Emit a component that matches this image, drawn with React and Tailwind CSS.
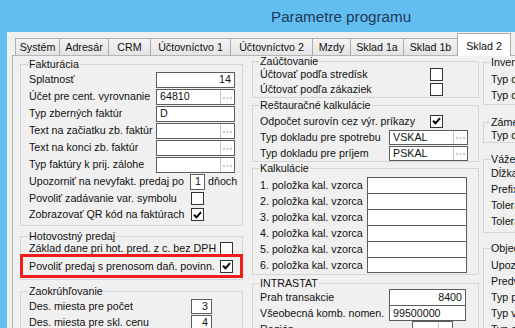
import clsx from 'clsx';

function Check({ on }) {
  return (
    <span className="w-[13px] h-[13px] shrink-0 border border-[#333] bg-white flex items-center justify-center">
      {on && (
        <svg width="9" height="8" viewBox="0 0 9 8">
          <path d="M1 3.8 L3.5 6.3 L8 1.2" fill="none" stroke="#000" strokeWidth="2" />
        </svg>
      )}
    </span>
  );
}

function Dots() {
  return (
    <span className="w-[14px] shrink-0 border-l border-[#c4c4c4] flex items-center justify-center pt-[2px]">
      <svg width="9" height="2" viewBox="0 0 9 2">
        <path d="M0 1h2M3.5 1h2M7 1h2" stroke="#9a9a9a" strokeWidth="1" />
      </svg>
    </span>
  );
}

function Input({ value, right, dots, className, h = 'h-[16px]' }) {
  return (
    <div className={clsx('shrink-0 border border-[#5c5c5c] bg-white flex items-stretch', h, className)}>
      <span className={clsx('flex-1 flex items-center px-[3px] overflow-hidden whitespace-nowrap', right && 'justify-end')}>
        {value}
      </span>
      {dots && <Dots />}
    </div>
  );
}

function Row({ label, lw, h = 'h-[17px]', children }) {
  return (
    <div className={clsx('flex items-center', h)}>
      <span className={clsx('whitespace-nowrap shrink-0 overflow-hidden', lw)}>{label}</span>
      {children}
    </div>
  );
}

function Group({ title, className, children }) {
  return (
    <fieldset className={clsx('border border-[#d5d5d5] min-w-0 m-0', className)}>
      <legend className="-ml-px px-px leading-[12px] whitespace-nowrap">{title}</legend>
      {children}
    </fieldset>
  );
}

const tabs = [
  ['Systém', 'w-[45px] border-l'],
  ['Adresár', 'w-[49px]'],
  ['CRM', 'w-[42px]'],
  ['Účtovníctvo 1', 'w-[80px]'],
  ['Účtovníctvo 2', 'w-[82px]'],
  ['Mzdy', 'w-[38px]'],
  ['Sklad 1a', 'w-[53px]'],
  ['Sklad 1b', 'w-[54px]'],
];

export default function App() {
  return (
    <div className="w-[515px] h-[328px] overflow-hidden bg-[#62bdf0] text-[10.7px] leading-[13px] text-[#111] flex flex-col font-['Liberation_Sans',Arial,sans-serif]">
      <div className="h-[32px] shrink-0 flex items-center pl-[271px] text-[15.2px] text-[#203a58]">
        Parametre programu
      </div>

      <div className="flex-1 ml-[7px] bg-[#f0f0f0] pl-[5px] flex flex-col min-h-0">
        {/* tabs */}
        <div className="h-[22px] mt-[1px] shrink-0 flex items-end pl-[3px]">
          {tabs.map(([t, w]) => (
            <div
              key={t}
              className={clsx(
                'h-[17px] shrink-0 border-t border-r border-[#acacac] bg-linear-to-b from-[#f3f3f3] to-[#e4e4e4] flex items-center justify-center whitespace-nowrap pt-px',
                w
              )}
            >
              {t}
            </div>
          ))}
          <div className="relative z-10 -ml-px -mb-px w-[54px] h-[23px] shrink-0 border-l border-t border-r border-[#acacac] bg-white flex items-center justify-center pt-[3px]">
            Sklad 2
          </div>
        </div>

        {/* panel */}
        <div className="flex-1 border-t border-l border-[#b4b4b4] flex items-start pl-[7px] min-h-0">
          {/* left column */}
          <div className="w-[223px] shrink-0 flex flex-col">
            <Group title="Fakturácia" className="mt-[2px] pl-[8px] pt-px pb-[3px]">
              <Row label="Splatnosť" lw="w-[127px]"><Input value="14" right className="w-[79px]" /></Row>
              <Row label="Účet pre cent. vyrovnanie" lw="w-[127px]"><Input value="64810" dots className="w-[79px]" /></Row>
              <Row label="Typ zberných faktúr" lw="w-[127px]"><Input value="D" className="w-[79px]" /></Row>
              <Row label="Text na začiatku zb. faktúr" lw="w-[127px]"><Input dots className="w-[79px]" /></Row>
              <Row label="Text na konci zb. faktúr" lw="w-[127px]"><Input dots className="w-[79px]" /></Row>
              <Row label="Typ faktúry k prij. zálohe" lw="w-[127px]"><Input dots className="w-[79px]" /></Row>
              <Row label="Upozorniť na nevyfakt. predaj po" lw="w-[161px]">
                <Input value="1" right className="w-[15px]" />
                <span className="ml-[3px]">dňoch</span>
              </Row>
              <Row label="Povoliť zadávanie var. symbolu" lw="w-[162px]"><Check /></Row>
              <Row label="Zobrazovať QR kód na faktúrach" lw="w-[162px]" h="h-[15px]"><Check on /></Row>
            </Group>

            <Group title="Hotovostný predaj" className="mt-[4px] pl-[8px] pt-px pb-px">
              <Row label="Základ dane pri hot. pred. z c. bez DPH" lw="w-[191px]" h="h-[11px]"><Check /></Row>
              <div className="relative -ml-[9px] w-[223px] h-[24px] border-[3px] border-[#f01c1c] pl-[6px] flex items-center">
                <span className="w-[191px] whitespace-nowrap">Povoliť predaj s prenosom daň. povinn.</span>
                <Check on />
              </div>
            </Group>

            <Group title="Zaokrúhľovanie" className="mt-[5px] pl-[8px] pt-px">
              <Row label="Des. miesta pre počet" lw="w-[162px]" h="h-[16px]"><Input value="3" right h="h-[15px]" className="w-[21px]" /></Row>
              <Row label="Des. miesta pre skl. cenu" lw="w-[162px]" h="h-[16px]"><Input value="4" right h="h-[15px]" className="w-[21px]" /></Row>
            </Group>
          </div>

          {/* middle column */}
          <div className="w-[227px] shrink-0 ml-[9px] flex flex-col">
            <Group title="Zaúčtovanie" className="-mt-px pl-[7px]">
              <Row label="Účtovať podľa stredísk" lw="w-[170px]" h="h-[15px]"><Check /></Row>
              <Row label="Účtovať podľa zákaziek" lw="w-[170px]" h="h-[15px]"><Check /></Row>
            </Group>

            <Group title="Reštauračné kalkulácie" className="mt-px pl-[7px] pt-[2px]">
              <Row label="Odpočet surovín cez výr. príkazy" lw="w-[170px]" h="h-[16px]"><Check on /></Row>
              <Row label="Typ dokladu pre spotrebu" lw="w-[129px]" h="h-[16px]"><Input value="VSKAL" dots h="h-[15px]" className="w-[79px]" /></Row>
              <Row label="Typ dokladu pre príjem" lw="w-[129px]" h="h-[16px]"><Input value="PSKAL" dots h="h-[15px]" className="w-[79px]" /></Row>
            </Group>

            <Group title="Kalkulácie" className="pl-[7px] pt-[3px] pb-px">
              {[1, 2, 3, 4, 5, 6].map(n => (
                <Row key={n} label={`${n}. položka kal. vzorca`} lw="w-[107px]" h="h-[16px]">
                  <Input className={clsx('w-[100px]', n < 6 && 'border-b-0')} />
                </Row>
              ))}
            </Group>

            <Group title="INTRASTAT" className="mt-[2px] pl-[7px]">
              <Row label="Prah transakcie" lw="w-[129px]" h="h-[16px]"><Input value="8400" right className="w-[77px] border-b-0" /></Row>
              <Row label="Všeobecná komb. nomen." lw="w-[129px]" h="h-[16px]"><Input value="99500000" className="w-[77px]" /></Row>
              <Row label="Región" lw="w-[152px]" h="h-[16px]"><Input dots className="w-[41px]" /></Row>
            </Group>
          </div>

          {/* right column, cut off by the window */}
          <div className="w-[200px] shrink-0 ml-[4px] flex flex-col">
            <Group title="Inventúra" className="pl-[7px] pt-[3px] pb-px">
              <Row label="Typ dokladu pre manko" h="h-[16px]" />
              <Row label="Typ dokladu pre prebytok" h="h-[16px]" />
            </Group>
            <Group title="Zámena tovaru" className="mt-[11px] pl-[7px]">
              <Row label="Typ dokladu" h="h-[14px]" />
            </Group>
            <Group title="Vážené položky" className="mt-[10px] pl-[7px] pb-[3px]">
              <Row label="Dĺžka kódu" h="h-[16px]" />
              <Row label="Prefix" h="h-[16px]" />
              <Row label="Tolerancia mínus" h="h-[16px]" />
              <Row label="Tolerancia plus" h="h-[16px]" />
            </Group>
            <Group title="Objednávky" className="mt-[9px] pl-[7px] pt-[3px]">
              <Row label="Upozorniť na nedodané" h="h-[16px]" />
              <Row label="Predvolený sklad" h="h-[16px]" />
              <Row label="Typ príjemky" h="h-[16px]" />
              <Row label="Typ výdajky" h="h-[16px]" />
              <Row label="Typ objednávky" h="h-[16px]" />
            </Group>
          </div>
        </div>
      </div>
    </div>
  );
}
